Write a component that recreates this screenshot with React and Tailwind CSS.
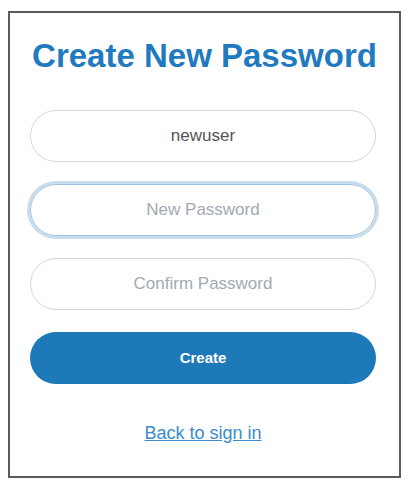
export default function App() {
  const font = { fontFamily: '"Liberation Sans", Arial, sans-serif' };
  return (
    <div className="w-[415px] h-[487px] bg-white pt-[11px] pl-[8px]" style={font}>
      <div className="w-[393px] h-[467px] border-2 border-[#5b5b5b] flex flex-col px-[20px] pt-[26px]">
        <h1 className="text-[33px] leading-[33px] font-bold text-[#1f7abf] text-center whitespace-nowrap">
          Create New Password
        </h1>
        <div className="mt-[38px] flex flex-col gap-[22px] w-[346px]">
          <input
            className="h-[52px] rounded-full border border-[#d6d6d6] text-center text-[17px] text-[#555555] outline-none"
            defaultValue="newuser"
          />
          <input
            type="password"
            className="h-[52px] rounded-full border border-[#9fc2e0] ring-[3px] ring-[#c9dcee] text-center text-[17px] text-[#555555] placeholder:text-[#a3a9b3] outline-none"
            placeholder="New Password"
          />
          <input
            type="password"
            className="h-[52px] rounded-full border border-[#d6d6d6] text-center text-[17px] text-[#555555] placeholder:text-[#a3a9b3] outline-none"
            placeholder="Confirm Password"
          />
          <button className="h-[52px] rounded-full bg-[#1e79b9] text-white text-[15px] font-bold">
            Create
          </button>
        </div>
        <div className="mt-[36px] text-center w-[346px]">
          <a href="#" className="text-[18px] text-[#3a8ccd] underline">
            Back to sign in
          </a>
        </div>
      </div>
    </div>
  );
}
